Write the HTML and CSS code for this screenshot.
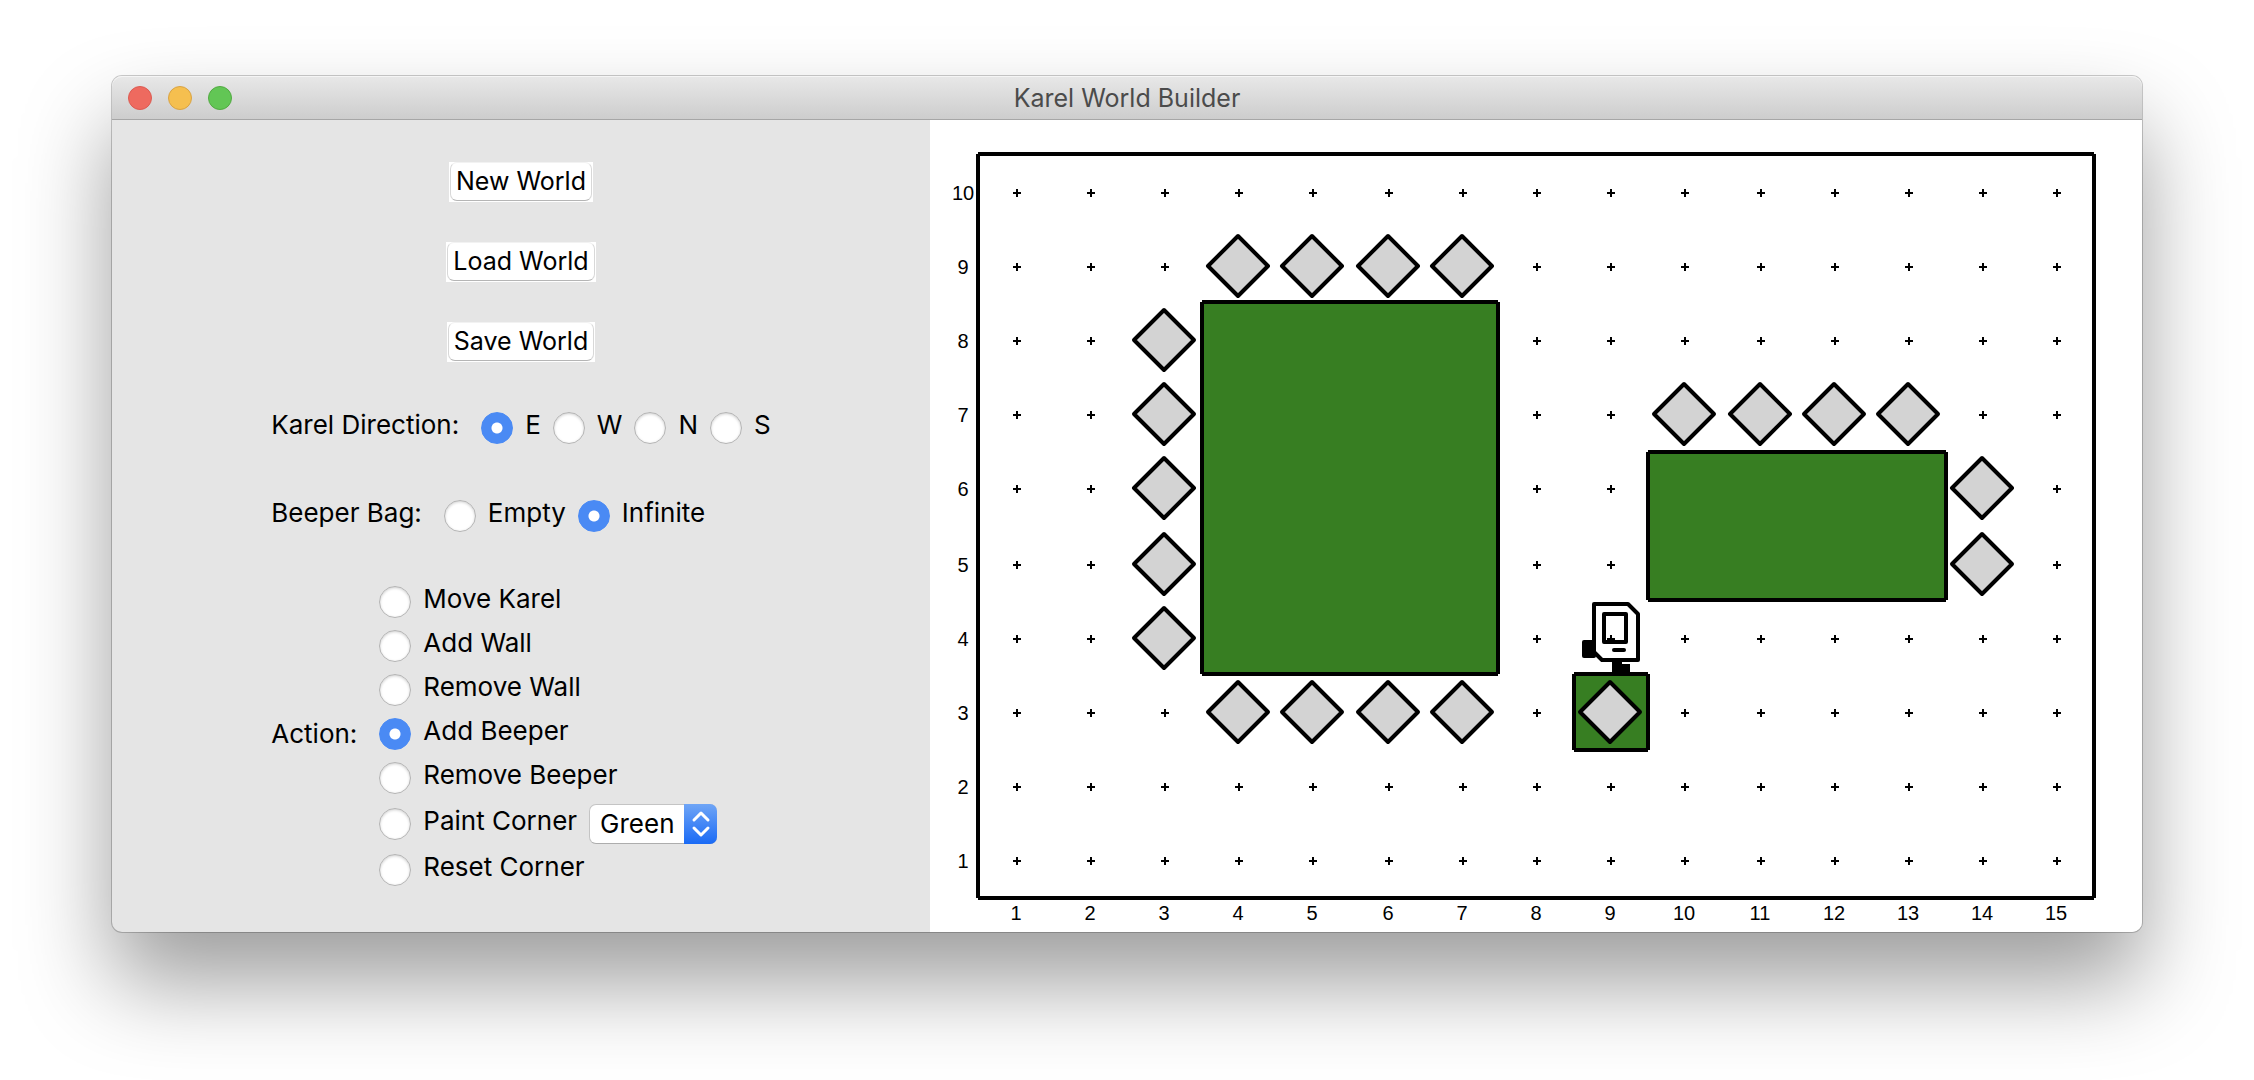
FILE: index.html
```html
<!DOCTYPE html>
<html lang="en">
<head>
<meta charset="utf-8">
<meta name="viewport" content="width=device-width, initial-scale=1">
<title>Karel World Builder</title>
<link rel="stylesheet" href="styles.css">
</head>
<body>
<main class="window">
  <header class="titlebar">
    <div class="lights">
      <button class="light light-close" type="button" aria-label="Close"></button>
      <button class="light light-minimize" type="button" aria-label="Minimize"></button>
      <button class="light light-zoom" type="button" aria-label="Zoom"></button>
    </div>
    <h1 class="title">Karel World Builder</h1>
  </header>
  <div class="content">
    <form class="sidebar">
      <div class="buttons">
        <button class="button" type="button"><span class="face">New World</span></button>
        <button class="button" type="button"><span class="face">Load World</span></button>
        <button class="button" type="button"><span class="face">Save World</span></button>
      </div>
      <div class="options">
        <div class="group" role="radiogroup" aria-labelledby="direction-label">
          <span class="group-label" id="direction-label">Karel Direction:</span>
          <div class="choices">
            <label class="choice"><input class="radio" type="radio" name="direction" checked><span class="choice-text">E</span></label>
            <label class="choice"><input class="radio" type="radio" name="direction"><span class="choice-text">W</span></label>
            <label class="choice"><input class="radio" type="radio" name="direction"><span class="choice-text">N</span></label>
            <label class="choice"><input class="radio" type="radio" name="direction"><span class="choice-text">S</span></label>
          </div>
        </div>
        <div class="group" role="radiogroup" aria-labelledby="bag-label">
          <span class="group-label" id="bag-label">Beeper Bag:</span>
          <div class="choices">
            <label class="choice"><input class="radio" type="radio" name="bag"><span class="choice-text">Empty</span></label>
            <label class="choice"><input class="radio" type="radio" name="bag" checked><span class="choice-text">Infinite</span></label>
          </div>
        </div>
        <div class="group group-action" role="radiogroup" aria-labelledby="action-label">
          <span class="group-label" id="action-label">Action:</span>
          <div class="actions">
            <div class="action"><label class="choice"><input class="radio" type="radio" name="action"><span class="choice-text">Move Karel</span></label></div>
            <div class="action"><label class="choice"><input class="radio" type="radio" name="action"><span class="choice-text">Add Wall</span></label></div>
            <div class="action"><label class="choice"><input class="radio" type="radio" name="action"><span class="choice-text">Remove Wall</span></label></div>
            <div class="action"><label class="choice"><input class="radio" type="radio" name="action" checked><span class="choice-text">Add Beeper</span></label></div>
            <div class="action"><label class="choice"><input class="radio" type="radio" name="action"><span class="choice-text">Remove Beeper</span></label></div>
            <div class="action action-paint">
              <label class="choice"><input class="radio" type="radio" name="action"><span class="choice-text">Paint Corner</span></label>
              <div class="popup">
                <select class="select" aria-label="Corner color">
                  <option>Green</option>
                  <option>Red</option>
                  <option>Blue</option>
                </select>
                <svg class="arrows" viewBox="0 0 33 40" aria-hidden="true"><path d="M10 16l7-7 7 7M10 24l7 7 7-7"/></svg>
              </div>
            </div>
            <div class="action"><label class="choice"><input class="radio" type="radio" name="action"><span class="choice-text">Reset Corner</span></label></div>
          </div>
        </div>
      </div>
    </form>
    <svg class="world" viewBox="0 0 1212 812" role="img" aria-label="Karel world, 15 by 10">
      <defs>
        <path id="row" class="cross" d="M83 0h8m-4-4v8M157 0h8m-4-4v8M231 0h8m-4-4v8M305 0h8m-4-4v8M379 0h8m-4-4v8M455 0h8m-4-4v8M529 0h8m-4-4v8M603 0h8m-4-4v8M677 0h8m-4-4v8M751 0h8m-4-4v8M827 0h8m-4-4v8M901 0h8m-4-4v8M975 0h8m-4-4v8M1049 0h8m-4-4v8M1123 0h8m-4-4v8"/>
        <path id="beeper" class="beeper" d="M0-30L30 0L0 30L-30 0Z"/>
      </defs>

      <use href="#row" y="73"/><use href="#row" y="147"/><use href="#row" y="221"/><use href="#row" y="295"/><use href="#row" y="369"/>
      <use href="#row" y="445"/><use href="#row" y="519"/><use href="#row" y="593"/><use href="#row" y="667"/><use href="#row" y="741"/>

      <g class="paint">
        <rect x="272" y="182" width="296" height="372"/>
        <rect x="718" y="332" width="298" height="148"/>
        <rect x="644" y="554" width="74" height="76"/>
      </g>

      <!-- Karel, facing east -->
      <g class="karel">
        <rect class="limb" x="652" y="520" width="14" height="18" rx="2"/>
        <path class="limb" d="M682 540h10v4h8v10h-18z"/>
        <path d="M664 484H698L708 494V540H672L664 532Z"/>
        <path d="M674 494H696V522H674Z"/>
        <path d="M684 530H694"/>
      </g>
      <path class="cross" d="M677 519h8m-4-4v8"/>

      <path class="wall" d="M48 34H1164M48 778H1164M48 34V778M1164 34V778"/>
      <path class="wall" d="M272 182H568M272 554H568M272 182V554M568 182V554"/>
      <path class="wall" d="M718 332H1016M718 480H1016M718 332V480M1016 332V480"/>
      <path class="wall" d="M644 554H718M644 630H718M644 554V630M718 554V630"/>

      <use href="#beeper" x="308" y="146"/><use href="#beeper" x="382" y="146"/><use href="#beeper" x="458" y="146"/><use href="#beeper" x="532" y="146"/>
      <use href="#beeper" x="234" y="220"/><use href="#beeper" x="234" y="294"/><use href="#beeper" x="234" y="368"/><use href="#beeper" x="234" y="444"/><use href="#beeper" x="234" y="518"/>
      <use href="#beeper" x="308" y="592"/><use href="#beeper" x="382" y="592"/><use href="#beeper" x="458" y="592"/><use href="#beeper" x="532" y="592"/>
      <use href="#beeper" x="754" y="294"/><use href="#beeper" x="830" y="294"/><use href="#beeper" x="904" y="294"/><use href="#beeper" x="978" y="294"/>
      <use href="#beeper" x="1052" y="368"/><use href="#beeper" x="1052" y="444"/><use href="#beeper" x="680" y="592"/>

      <g class="axis">
        <text x="33" y="80">10</text><text x="33" y="154">9</text><text x="33" y="228">8</text><text x="33" y="302">7</text><text x="33" y="376">6</text>
        <text x="33" y="452">5</text><text x="33" y="526">4</text><text x="33" y="600">3</text><text x="33" y="674">2</text><text x="33" y="748">1</text>
        <text x="86" y="800">1</text><text x="160" y="800">2</text><text x="234" y="800">3</text><text x="308" y="800">4</text><text x="382" y="800">5</text>
        <text x="458" y="800">6</text><text x="532" y="800">7</text><text x="606" y="800">8</text><text x="680" y="800">9</text><text x="754" y="800">10</text>
        <text x="830" y="800">11</text><text x="904" y="800">12</text><text x="978" y="800">13</text><text x="1052" y="800">14</text><text x="1126" y="800">15</text>
      </g>
    </svg>
  </div>
</main>
</body>
</html>
```
FILE: styles.css
```css
* {
  box-sizing: border-box;
}

body {
  min-height: 100vh;
  margin: 0;
  padding: 76px 112px 148px;
  background: #fff;
  color: #000;
  font: 26px/32px Inter, "Liberation Sans", sans-serif;
}

.window {
  border-radius: 10px;
  background: #e5e5e5;
  box-shadow: 0 0 0 1px rgba(0, 0, 0, 0.2), 0 50px 90px rgba(0, 0, 0, 0.39);
}

.titlebar {
  display: grid;
  grid-template-columns: 1fr auto 1fr;
  align-items: center;
  height: 44px;
  padding: 0 16px;
  border-bottom: 1px solid #a6a6a6;
  border-radius: 10px 10px 0 0;
  background: linear-gradient(#e8e8e8, #cdcdcd);
  box-shadow: inset 0 1px #f5f5f5;
}

.lights {
  display: flex;
  gap: 16px;
}

.light {
  width: 24px;
  height: 24px;
  padding: 0;
  border: 1px solid;
  border-radius: 50%;
}

.light-close {
  border-color: #dc5b52;
  background: #ee6a5f;
}

.light-minimize {
  border-color: #d9a344;
  background: #f5bf4f;
}

.light-zoom {
  border-color: #52aa42;
  background: #62c655;
}

.title {
  margin: 0;
  color: #4b4b4b;
  font-size: 25px;
  font-weight: 400;
}

.content {
  display: grid;
  grid-template-columns: 818fr 1212fr;
}

.sidebar {
  display: flex;
  flex-direction: column;
  align-items: center;
  gap: 50px;
  padding: 42px 0 40px;
}

.buttons {
  display: flex;
  flex-direction: column;
  align-items: center;
  gap: 40px;
}

.button {
  height: 40px;
  padding: 0 1px 1px;
  border: 0;
  background: #fff;
  color: inherit;
  font: inherit;
  font-size: 25px;
}

.face {
  display: block;
  height: 39px;
  padding: 2px 5px 0;
  border: 1px solid #d8d8d8;
  border-top-color: #f2f2f2;
  border-bottom-color: #b5b5b5;
  border-radius: 7px;
}

.options {
  display: flex;
  flex-direction: column;
}

.group {
  display: flex;
  align-items: center;
  gap: 22px;
  margin-bottom: 56px;
}

.group + .group {
  margin-bottom: 48px;
}

.options .group-action {
  margin-bottom: 0;
}

.group-label {
  padding-bottom: 6px;
  line-height: 26px;
}

.group-action .group-label {
  padding-bottom: 4px;
}

.choices {
  display: flex;
  gap: 12px;
}

.choice {
  display: flex;
  align-items: center;
  gap: 12px;
  height: 32px;
}

.choice-text {
  padding-bottom: 6px;
}

.radio {
  appearance: none;
  width: 32px;
  height: 32px;
  margin: 0;
  border: 1px solid #b4b4b4;
  border-radius: 50%;
  background: #fff;
  box-shadow: inset 0 1px 3px rgba(0, 0, 0, 0.2);
}

.radio:checked {
  border-color: #4a8af4;
  background: radial-gradient(circle, #fff 5px, #4a8af4 6px);
  box-shadow: none;
}

.action {
  display: flex;
  align-items: center;
  gap: 12px;
  height: 44px;
}

.action-paint {
  height: 48px;
}

.popup {
  position: relative;
  width: 128px;
  height: 40px;
}

.select {
  appearance: none;
  display: block;
  width: 100%;
  height: 100%;
  padding: 0 33px 0 10px;
  border: 1px solid #c4c4c4;
  border-bottom-color: #adadad;
  border-radius: 7px;
  background: #fff;
  color: inherit;
  font: inherit;
}

.arrows {
  position: absolute;
  top: 0;
  right: 0;
  width: 33px;
  height: 40px;
  border-radius: 0 7px 7px 0;
  background: linear-gradient(#6fa5f6, #1a6af5);
  fill: none;
  stroke: #fff;
  stroke-width: 3;
  stroke-linecap: round;
  stroke-linejoin: round;
  pointer-events: none;
}

.world {
  display: block;
  width: 100%;
  border-radius: 0 0 10px 0;
  background: #fff;
}

.cross {
  fill: none;
  stroke: #000;
  stroke-width: 2;
}

.wall {
  fill: none;
  stroke: #000;
  stroke-width: 4;
}

.paint {
  fill: #377e22;
}

.beeper {
  fill: #d3d3d3;
  stroke: #000;
  stroke-width: 4;
  stroke-linejoin: round;
}

.karel {
  fill: #fff;
  stroke: #000;
  stroke-width: 4;
  stroke-linecap: round;
  stroke-linejoin: round;
}

.limb {
  fill: #000;
  stroke: none;
}

.axis {
  font: 20px "Liberation Sans", sans-serif;
  text-anchor: middle;
}
```
